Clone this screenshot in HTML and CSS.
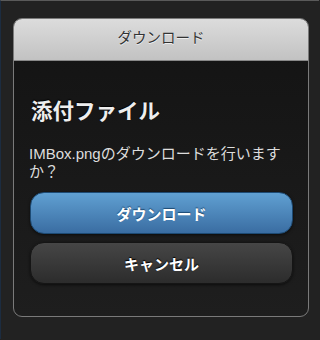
FILE: index.html
```html
<!DOCTYPE html>
<html>
  <head>
    <meta charset="utf-8">
    <title>ダウンロード</title>
    <link rel="stylesheet" href="styles.css">
  </head>
  <body>
    <div class="screen">
      <div class="dialog">
        <div class="dialog-header">ダウンロード</div>
        <div class="dialog-content">
          <h2 class="dialog-title">添付ファイル</h2>
          <p class="dialog-text">IMBox.pngのダウンロードを行いますか？</p>
          <button class="dialog-button download">ダウンロード</button>
          <button class="dialog-button cancel">キャンセル</button>
        </div>
      </div>
    </div>
  </body>
</html>
```

FILE: styles.css
```css
body {
  margin: 0;
  font-family: "Liberation Sans", "Noto Sans CJK JP", sans-serif;
  background-color: #222;
}
.screen {
  width: 319px;
  height: 339px;
  border-top: 1px solid #5a5a5a;
  border-left: 1px solid #1c2c40;
  padding: 17px 0 0 12px;
  box-sizing: border-box;
  background-color: #222;
}
.dialog {
  width: 296px;
  height: 299px;
  box-sizing: border-box;
  border: 1px solid #7a7a7a;
  border-radius: 9px;
  overflow: hidden;
  background: linear-gradient(#131313, #1e1e1e);
}
.dialog-header {
  height: 41px;
  line-height: 38px;
  text-align: center;
  font-size: 14.5px;
  color: #333;
  text-shadow: 0 1px 0 #eee;
  background: linear-gradient(#dcdcdc, #c2c2c2);
  border-bottom: 1px solid #888;
}
.dialog-content {
  padding: 15px;
}
.dialog-title {
  margin: 22px 0 0 2px;
  font-size: 21.5px;
  line-height: 28px;
  font-weight: bold;
  color: #eee;
  text-shadow: 0 -1px 1px #000;
}
.dialog-text {
  margin: 19px 0 11px;
  font-size: 15px;
  line-height: 18px;
  color: #ddd;
}
.dialog-button {
  display: block;
  width: 263px;
  height: 42px;
  margin: 0 0 8px 1px;
  border-radius: 14px;
  font-family: inherit;
  font-size: 15px;
  font-weight: bold;
  color: #fff;
  cursor: pointer;
  box-shadow: 0 1px 3px rgba(0, 0, 0, 0.6);
}
.download {
  border: 1px solid #1d4a73;
  background: linear-gradient(#60a0d2, #3a6da2);
  text-shadow: 0 -1px 1px #1d4a73;
}
.cancel {
  border: 1px solid #151515;
  background: linear-gradient(#464646, #2c2c2c);
  text-shadow: 0 -1px 1px #000;
}
```
